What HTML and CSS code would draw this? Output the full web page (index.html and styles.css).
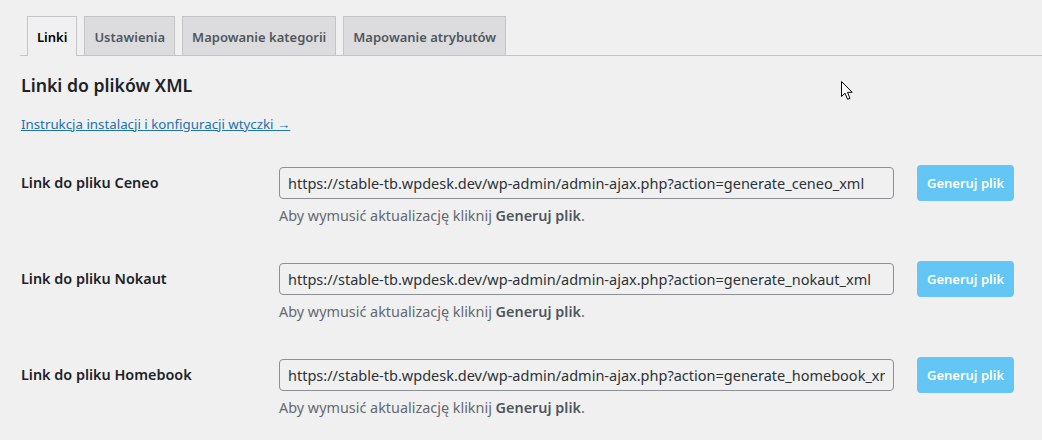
FILE: index.html
```html
<!DOCTYPE html>
<html lang="pl">
<head>
<meta charset="utf-8">
<title>Linki</title>
<link rel="stylesheet" href="styles.css">
</head>
<body>
<div class="page">
  <nav class="tabs">
    <a class="tab tab-active" href="#">Linki</a>
    <a class="tab" href="#">Ustawienia</a>
    <a class="tab" href="#">Mapowanie kategorii</a>
    <a class="tab" href="#">Mapowanie atrybutów</a>
  </nav>

  <h2 class="title">Linki do plików XML</h2>
  <p class="docs"><a href="#">Instrukcja instalacji i konfiguracji wtyczki →</a></p>

  <div class="rows">
    <div class="row">
      <div class="label">Link do pliku Ceneo</div>
      <div class="field">
        <input class="url" type="text" readonly value="https://stable-tb.wpdesk.dev/wp-admin/admin-ajax.php?action=generate_ceneo_xml">
        <p class="desc">Aby wymusić aktualizację kliknij <strong>Generuj plik</strong>.</p>
      </div>
      <button class="btn" type="button">Generuj plik</button>
    </div>
    <div class="row">
      <div class="label">Link do pliku Nokaut</div>
      <div class="field">
        <input class="url" type="text" readonly value="https://stable-tb.wpdesk.dev/wp-admin/admin-ajax.php?action=generate_nokaut_xml">
        <p class="desc">Aby wymusić aktualizację kliknij <strong>Generuj plik</strong>.</p>
      </div>
      <button class="btn" type="button">Generuj plik</button>
    </div>
    <div class="row">
      <div class="label">Link do pliku Homebook</div>
      <div class="field">
        <input class="url" type="text" readonly value="https://stable-tb.wpdesk.dev/wp-admin/admin-ajax.php?action=generate_homebook_xml">
        <p class="desc">Aby wymusić aktualizację kliknij <strong>Generuj plik</strong>.</p>
      </div>
      <button class="btn" type="button">Generuj plik</button>
    </div>
  </div>

  <svg class="cursor" width="14" height="21" viewBox="0 0 14 21" aria-hidden="true">
    <path d="M1.5 1.5 L1.5 16.5 L5 13.2 L7.6 19.3 L10 18.3 L7.5 12.3 L12.2 12.3 Z" fill="#fff" stroke="#000" stroke-width="1" stroke-linejoin="miter"/>
  </svg>
</div>
</body>
</html>
```

FILE: styles.css
```css
html, body {
  margin: 0;
  padding: 0;
  background: #f0f0f1;
}

body {
  font-family: "Noto Sans", "Open Sans", sans-serif;
  color: #1d2327;
  font-size: 14px;
}

.page {
  position: relative;
  padding-left: 20px;
  height: 440px;
  overflow: hidden;
}

.tabs {
  display: flex;
  gap: 7px;
  padding: 16px 0 0 7px;
  border-bottom: 1px solid #c3c4c7;
  height: 39px;
  align-items: flex-start;
}

.tab {
  display: block;
  box-sizing: border-box;
  height: 39px;
  line-height: 36px;
  padding: 2px 9px 0;
  border: 1px solid #c3c4c7;
  border-bottom: none;
  background: #dcdcde;
  color: #50575e;
  font-size: 13px;
  font-weight: 600;
  text-decoration: none;
  white-space: nowrap;
}

.tab-active {
  background: #f0f0f1;
  color: #000;
  height: 40px;
  padding: 2px 9px 0;
}

.title {
  margin: 17px 0 0 1px;
  font-size: 17.7px;
  line-height: 24px;
  font-weight: 600;
  color: #1d2327;
}

.docs {
  margin: 18px 0 0 1px;
  font-size: 13.3px;
  line-height: 18px;
}

.docs a {
  color: #2271b1;
  text-decoration: underline;
}

.rows {
  display: flex;
  flex-direction: column;
  gap: 37px;
  margin-top: 34px;
}

.row {
  display: grid;
  grid-template-columns: 259px 615px 97px;
  align-items: start;
}

.label {
  margin-left: 1px;
  height: 32px;
  line-height: 31px;
  font-weight: 600;
  font-size: 14.4px;
  color: #1d2327;
}

.field {
  display: flex;
  flex-direction: column;
}

.url {
  box-sizing: border-box;
  width: 615px;
  height: 32px;
  margin: 0;
  padding: 0 8px;
  border: 1px solid #8c8f94;
  border-radius: 4px;
  background: #f0f0f1;
  color: #2c3338;
  font-family: inherit;
  font-size: 14.5px;
  outline: none;
}

.desc {
  margin: 7px 0 0;
  line-height: 20px;
  color: #646970;
  font-size: 14.4px;
}

.desc strong {
  font-weight: 600;
  color: #50575e;
}

.btn {
  margin: -2px 0 0 23px;
  box-sizing: border-box;
  width: 97px;
  height: 36px;
  border: none;
  border-radius: 4px;
  background: #63c6f4;
  color: #fff;
  font-family: inherit;
  font-size: 13px;
  font-weight: 600;
  padding: 0;
  cursor: default;
}

.cursor {
  position: absolute;
  left: 840px;
  top: 80px;
}
```
